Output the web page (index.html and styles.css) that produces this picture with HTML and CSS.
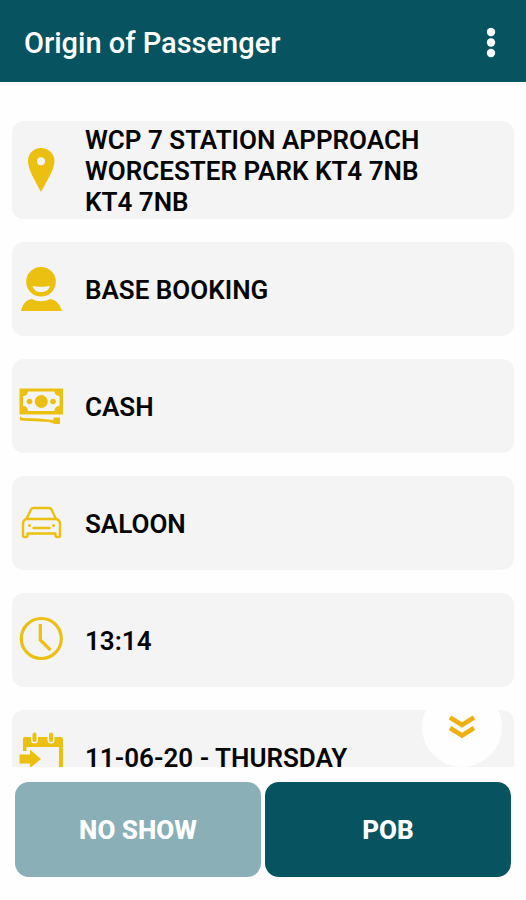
FILE: index.html
```html
<!DOCTYPE html>
<html lang="en">
<head>
<meta charset="utf-8">
<meta name="viewport" content="width=device-width, initial-scale=1">
<title>Origin of Passenger</title>
<link rel="stylesheet" href="styles.css">
</head>
<body>
<header class="topbar">
  <h1 class="title">Origin of Passenger</h1>
  <button class="menu" type="button" aria-label="More options">
    <svg width="10" height="30" viewBox="0 0 10 30" fill="currentColor"><circle cx="5" cy="4" r="4.200"/><circle cx="5" cy="14.500" r="4.200"/><circle cx="5" cy="25" r="4.200"/></svg>
  </button>
</header>
<main class="details">
  <ul class="list">
    <li class="card">
      <svg class="icon" viewBox="0 0 44 44" fill="currentColor"><path fill-rule="evenodd" d="M22 0C14.500 0 9 5.500 9 13C9 21 15 31 22 44C29 31 35.500 21 35.500 13C35.500 5.500 29.500 0 22 0ZM22 9.200A4 4 0 1 1 22 17.200A4 4 0 1 1 22 9.200Z"/></svg>
      <span class="text">WCP 7 STATION APPROACH<br>WORCESTER PARK KT4 7NB<br>KT4 7NB</span>
    </li>
    <li class="card">
      <svg class="icon" viewBox="0 0 44 44" fill="currentColor"><path fill-rule="evenodd" d="M22 0A14.800 14.800 0 1 1 22 29.600A14.800 14.800 0 1 1 22 0ZM13.500 19C15 23.500 18 25 22 25C26 25 29.500 23.500 31 19C26 20 18.500 20 13.500 19Z"/><path d="M13 32C18 35 26 35 31 32C37 32.500 41 37.500 43 44H2C3.500 37.500 7 32.500 13 32Z"/></svg>
      <span class="text">BASE BOOKING</span>
    </li>
    <li class="card">
      <svg class="icon" viewBox="0 0 44 44" fill="currentColor"><path fill-rule="evenodd" d="M0.500 4.500H44V30.500H0.500ZM9 7.500C9 10 7 12 4 12V22C7 22 9 24 9 27H35.500C35.500 24 37.500 22 40.500 22V12C37.500 12 35.500 10 35.500 7.500Z"/><circle cx="22.300" cy="17.500" r="6.500"/><circle cx="10.500" cy="17.500" r="2.800"/><circle cx="34" cy="17.500" r="2.800"/><path d="M1 32.500L4 34L20 34.500L34 36L35 33.500H41V40H36L30 38L1 36.500Z"/></svg>
      <span class="text">CASH</span>
    </li>
    <li class="card">
      <svg class="icon" viewBox="0 0 44 44" fill="none" stroke="currentColor" stroke-width="2.400" stroke-linejoin="round" stroke-linecap="round"><path d="M7.500 18L12 8.500Q12.700 7 14.500 7H30Q31.800 7 32.500 8.500L37 18M7.500 18H37Q41 19 41 23V35Q41 36 39.500 36H38Q36.500 36 36.500 34.500V32.500H8.500V34.500Q8.500 36 7 36H5.500Q4 36 4 34.500V23Q4 19 7.500 18ZM14.500 27H30.500"/><circle cx="10.500" cy="24.500" r="1.500" fill="currentColor" stroke="none"/><circle cx="34.500" cy="24.500" r="1.500" fill="currentColor" stroke="none"/></svg>
      <span class="text">SALOON</span>
    </li>
    <li class="card">
      <svg class="icon" viewBox="0 0 44 44" fill="none" stroke="currentColor" stroke-width="3.200"><circle cx="22.300" cy="20.500" r="20"/><path d="M21.300 6V22L31.500 32"/></svg>
      <span class="text">13:14</span>
    </li>
    <li class="card">
      <svg class="icon" viewBox="0 0 44 44" fill="currentColor"><path d="M6 2H42Q44 2 44 4V44H40V12H7.500V16H4V4Q4 2 6 2Z"/><path d="M15.500 0V5M32 0V5" stroke="#f4f4f4" stroke-width="7" stroke-linecap="round"/><path d="M15.500 -0.500V5M32 -0.500V5" stroke="currentColor" stroke-width="4" stroke-linecap="round"/><path d="M0.500 19.500H11V14.500L22 24L11 33V28.500H0.500Z"/></svg>
      <span class="text">11-06-20 - THURSDAY</span>
    </li>
  </ul>
  <button class="more" type="button" aria-label="Scroll down">
    <svg width="28" height="25" viewBox="0 0 28 25" fill="none" stroke="currentColor" stroke-width="4.500"><path d="M2 2.500L14 10L26 2.500M2 13L14 20.500L26 13"/></svg>
  </button>
</main>
<footer class="actions">
  <button class="action muted" type="button">NO SHOW</button>
  <button class="action" type="button">POB</button>
</footer>
</body>
</html>
```
FILE: styles.css
```css
* { box-sizing: border-box; }

body {
  margin: 0;
  height: 100vh;
  display: flex;
  flex-direction: column;
  background: #fefefe;
  color: #050505;
  font-family: Roboto, sans-serif;
}

button {
  margin: 0;
  padding: 0;
  border: 0;
  font: inherit;
  cursor: pointer;
}

svg { display: block; }

.topbar {
  display: flex;
  align-items: center;
  justify-content: space-between;
  padding: 25px 30px 21px 24px;
  background: #075360;
  color: #fff;
}

.title {
  margin: 0;
  font-size: 29px;
  line-height: 36px;
  font-weight: 500;
}

.menu {
  background: none;
  color: #fff;
}

.details {
  position: relative;
  flex: 1;
  min-height: 0;
  overflow: hidden;
}

.list {
  display: flex;
  flex-direction: column;
  gap: 23px;
  margin: 0;
  padding: 39px 12px 0;
  list-style: none;
}

.card {
  display: flex;
  align-items: center;
  gap: 22px;
  min-height: 94px;
  padding: 0 7px;
  border-radius: 12px;
  background: #f4f4f4;
}

.icon {
  flex: none;
  width: 44px;
  height: 44px;
  color: #ecc010;
  overflow: visible;
}

.text {
  padding: 4px 0 1px;
  font-size: 26px;
  line-height: 31px;
  font-weight: 600;
}

.more {
  position: absolute;
  right: 24px;
  bottom: 0;
  width: 80px;
  height: 80px;
  display: flex;
  align-items: center;
  justify-content: center;
  border-radius: 50%;
  background: #fefefe;
  color: #eeb010;
}

.actions {
  display: flex;
  gap: 4px;
  padding: 15px 15px 23px;
}

.action {
  flex: 1;
  height: 95px;
  border-radius: 14px;
  background: #075360;
  color: #fff;
  font-size: 26px;
  font-weight: 800;
}

.muted { background: #8aafb7; }
```
